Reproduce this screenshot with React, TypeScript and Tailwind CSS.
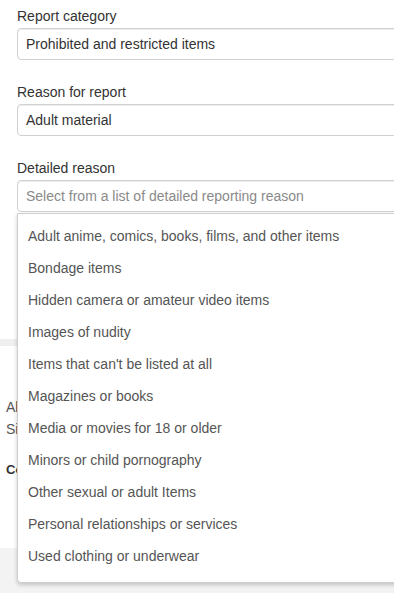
const DETAILED_REASONS = [
  "Adult anime, comics, books, films, and other items",
  "Bondage items",
  "Hidden camera or amateur video items",
  "Images of nudity",
  "Items that can't be listed at all",
  "Magazines or books",
  "Media or movies for 18 or older",
  "Minors or child pornography",
  "Other sexual or adult Items",
  "Personal relationships or services",
  "Used clothing or underwear",
];

function Field({
  label,
  value,
  placeholder,
  children,
  className = "",
}: {
  label: string;
  value?: string;
  placeholder?: string;
  children?: React.ReactNode;
  className?: string;
}) {
  return (
    <div className={`relative ${className}`}>
      <label className="block h-5 text-[14px] leading-5 text-[#333]">{label}</label>
      <div className="mt-[2px] flex h-8 w-[400px] items-center rounded-[4px] border border-[#d0d0d0] bg-white px-[8px] text-[14px] shadow-[inset_0_1px_1px_rgba(0,0,0,0.075)]">
        {value ? (
          <span className="text-[#333]">{value}</span>
        ) : (
          <span className="text-[#8a8a8a]">{placeholder}</span>
        )}
      </div>
      {children}
    </div>
  );
}

export default function App() {
  return (
    <div
      className="relative h-[593px] w-[394px] overflow-hidden bg-white"
      style={{ fontFamily: '"Liberation Sans", Arial, sans-serif' }}
    >
      <div className="px-[17px] pt-[6px]">
        <Field label="Report category" value="Prohibited and restricted items" />
        <Field label="Reason for report" value="Adult material" className="mt-[22px]" />
        <Field
          label="Detailed reason"
          placeholder="Select from a list of detailed reporting reason"
          className="z-10 mt-[22px]"
        >
          {/* open dropdown menu */}
          <ul className="absolute left-0 top-full mt-[1px] w-[400px] rounded-b-[4px] border border-[#cfcfcf] bg-white pb-[10px] pt-[6px] shadow-[0_2px_4px_rgba(0,0,0,0.2)]">
            {DETAILED_REASONS.map((r) => (
              <li key={r} className="flex h-8 items-center px-[10px] text-[14px] text-[#555]">
                {r}
              </li>
            ))}
          </ul>
        </Field>
      </div>

      {/* page content behind the menu, clipped by it */}
      <div className="mt-[127px] h-[7px] bg-[#efefef]" />
      <div className="w-[17px] overflow-hidden whitespace-nowrap pl-[6px] pt-[50px] text-[14px] text-[#555]">
        <p className="leading-[22px]">About</p>
        <p className="leading-[22px]">Since</p>
        <p className="mt-[20px] text-[13px] font-semibold leading-5 text-[#333]">Contact</p>
      </div>
      <div className="absolute inset-x-0 bottom-0 h-[45px] bg-[#f3f3f3]" />
    </div>
  );
}
